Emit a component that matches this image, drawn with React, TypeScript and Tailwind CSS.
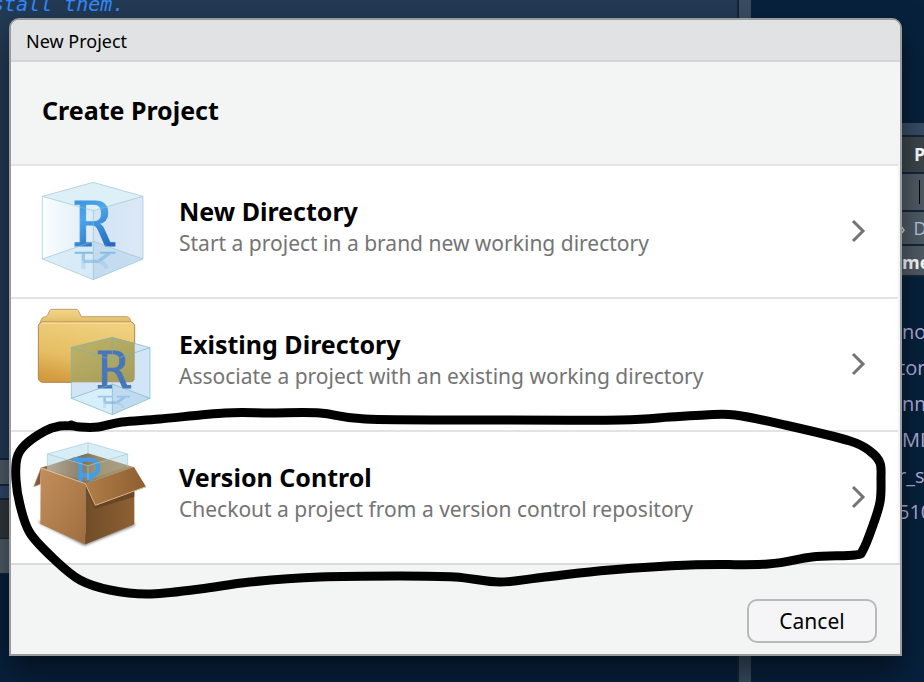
import React from "react";

type Point = [number, number];

const strokePoints: Point[] = [
  [71, 425], [80, 427], [98, 427], [122, 422], [160, 419], [225, 413], [270, 413], [320, 413], [365, 419], [480, 420],
  [620, 420], [670, 417], [705, 415], [735, 415], [785, 425], [850, 441], [871, 452], [880, 463], [881, 478],
  [880, 502], [872, 528], [863, 550], [855, 555], [812, 557], [768, 564], [690, 565], [610, 570], [545, 577],
  [500, 582], [455, 577], [400, 576], [320, 577], [250, 582], [200, 589], [148, 594], [110, 590], [80, 580], [55, 560],
  [30, 533], [20, 505], [16, 480], [17, 458], [25, 445], [45, 431], [60, 426], [73, 426],
];

function smoothPath(points: Point[]) {
  let d = `M${points[0][0]} ${points[0][1]}`;
  for (let i = 0; i < points.length - 1; i++) {
    const before = points[Math.max(i - 1, 0)];
    const a = points[i];
    const b = points[i + 1];
    const after = points[Math.min(i + 2, points.length - 1)];
    d += ` C${a[0] + (b[0] - before[0]) / 6} ${a[1] + (b[1] - before[1]) / 6}`;
    d += ` ${b[0] - (after[0] - a[0]) / 6} ${b[1] - (after[1] - a[1]) / 6} ${b[0]} ${b[1]}`;
  }
  return d;
}

function CubeIcon() {
  return (
    <svg aria-hidden="true" viewBox="33 -12 360 396" className="h-[132px] w-[120px] shrink-0">
      <defs>
        <linearGradient id="cubeLeft" x1="0" x2="1">
          <stop offset="0" stopColor="#fbfdff" />
          <stop offset="1" stopColor="#dcecf5" />
        </linearGradient>
        <linearGradient id="cubeRight" x1="0" x2="1">
          <stop offset="0" stopColor="#d3e4f4" />
          <stop offset="1" stopColor="#dbe8f7" />
        </linearGradient>
        <linearGradient id="cubeLetter" x1="0" y1="0" x2="0.4" y2="1">
          <stop offset="0" stopColor="#3387d3" />
          <stop offset="0.45" stopColor="#4ba6ec" />
          <stop offset="1" stopColor="#2468bd" />
        </linearGradient>
      </defs>
      <path d="M67 79 220 37 369 79 369 267 220 329 67 267Z" fill="#eaf5fa" />
      <path d="M67 79 220 122V329L67 267Z" fill="url(#cubeLeft)" />
      <path d="M220 122 369 79V267L220 329Z" fill="url(#cubeRight)" />
      <path d="M67 267 220 214V329Z" fill="#d3eaf7" opacity=".8" />
      <path d="M220 214 369 267 220 329Z" fill="#bfd8ed" opacity=".75" />
      <path d="M67 79 220 37 369 79 220 122Z" fill="#dceff6" opacity=".9" />
      <g fill="none" stroke="#86bae3" strokeWidth="13">
        <path d="M164 248H219M240 248H286" strokeWidth="6" />
        <path d="M190 250V272M268 250 238 272M190 274H238" opacity=".7" strokeWidth="10" />
        <path d="M190 272V297M238 274Q256 280 260 295" opacity=".3" />
      </g>
      <text x="156" y="228" fontSize="184" fill="url(#cubeLetter)" stroke="url(#cubeLetter)" strokeWidth="3" className="font-['DejaVu_Serif_Condensed','DejaVu_Serif',serif]">R</text>
      <path d="M67 79 220 37 369 79 369 267 220 329 67 267ZM67 79 220 122 369 79M220 122V329M67 267 220 214 369 267" fill="none" stroke="#93bfc9" strokeOpacity=".7" strokeWidth="2.5" />
    </svg>
  );
}

function FolderIcon() {
  return (
    <svg aria-hidden="true" viewBox="33 -3 360 396" className="h-[132px] w-[120px] shrink-0">
      <defs>
        <linearGradient id="folderFront" x1="0.6" y1="0" x2="0.3" y2="1">
          <stop offset="0" stopColor="#efd17f" />
          <stop offset="0.6" stopColor="#e6bd63" />
          <stop offset="1" stopColor="#d19a3d" />
        </linearGradient>
        <linearGradient id="folderBack" x1="0" y1="0" x2="0" y2="1">
          <stop offset="0" stopColor="#f3d78c" />
          <stop offset="1" stopColor="#dfb75d" />
        </linearGradient>
        <linearGradient id="folderOverlap" x1="0" y1="0" x2="1" y2="1">
          <stop offset="0" stopColor="#b9b167" />
          <stop offset="1" stopColor="#9d9a5c" />
        </linearGradient>
      </defs>
      <path d="M62 66Q62 52 77 50L82 47 89 32Q91 28 96 28H168Q173 28 175 32L184 50H320Q332 51 332 65V76H62Z" fill="url(#folderBack)" stroke="#b98d5b" strokeWidth="2.5" />
      <rect x="55" y="66" width="289" height="181" rx="13" fill="url(#folderFront)" stroke="#b5824d" strokeWidth="3" />
      <path d="M64 69H335" stroke="#fae7ae" strokeWidth="3" />
      <path d="M154 142 277 112 344 129V234Q344 247 331 247H154Z" fill="url(#folderOverlap)" opacity=".9" />
      <path d="M344 129 390 143V295L277 344 154 295V247H331Q344 247 344 234Z" fill="#d0e4f5" opacity=".95" />
      <path d="M154 295 277 252V344Z" fill="#d7f1fb" opacity=".8" />
      <path d="M277 252 390 295 277 344Z" fill="#b7d6ee" opacity=".65" />
      <g fill="none" stroke="#8fbde3" opacity=".8">
        <path d="M233 290H276M290 290H330" strokeWidth="5" />
        <path d="M254 292V308M313 292 292 307M254 308H290" strokeWidth="8" />
        <path d="M254 308V325M290 308Q306 312 310 323" strokeWidth="9" opacity=".4" />
      </g>
      <text x="227" y="264" fontSize="150" fill="#4876ba" stroke="#4876ba" strokeWidth="3" className="font-['DejaVu_Serif_Condensed','DejaVu_Serif',serif]">R</text>
      <path d="M154 142 277 112 390 143V295L277 344 154 295ZM154 142 277 180 390 143M277 112V180M277 252V344M154 295 277 252 390 295" fill="none" stroke="#73b3b5" strokeOpacity=".75" strokeWidth="2.5" />
    </svg>
  );
}

function BoxIcon() {
  return (
    <svg aria-hidden="true" viewBox="63 21 360 396" className="h-[132px] w-[120px] shrink-0">
      <defs>
        <linearGradient id="boxLeft" x1="0" y1="0" x2="1" y2="1">
          <stop offset="0" stopColor="#c28e5c" />
          <stop offset="1" stopColor="#a06e3e" />
        </linearGradient>
        <linearGradient id="boxRight" x1="0" x2="1">
          <stop offset="0" stopColor="#704d28" />
          <stop offset="1" stopColor="#8e6034" />
        </linearGradient>
        <linearGradient id="boxFlap" x1="0" y1="0" x2="1" y2="0">
          <stop offset="0" stopColor="#b07e47" />
          <stop offset="1" stopColor="#8d5e31" />
        </linearGradient>
        <linearGradient id="boxInside" x1="0" x2="1">
          <stop offset="0" stopColor="#b9ac9d" />
          <stop offset="0.45" stopColor="#80704f" />
          <stop offset="0.6" stopColor="#9a8a66" />
          <stop offset="1" stopColor="#aa9a7b" />
        </linearGradient>
        <filter id="boxBlur" x="-20%" y="-20%" width="140%" height="140%">
          <feGaussianBlur stdDeviation="5" />
        </filter>
        <clipPath id="boxOpening">
          <path d="M90 40H380V130L226 174 90 130Z" />
        </clipPath>
      </defs>
      <path d="M88 290 224 358 374 298 226 330Z" fill="#000" stroke="#000" strokeWidth="6" opacity=".55" filter="url(#boxBlur)" />
      <path d="M112 87 234 53 353 87V130H112Z" fill="#d9edf7" />
      <path d="M93 128 234 85 373 127 226 176Z" fill="url(#boxInside)" />
      <path d="M93 128 113 122V136Z" fill="#8e6337" />
      <path d="M112 87 234 122 353 87V123L226 168 112 132Z" fill="#c0d7da" opacity=".15" />
      <g clipPath="url(#boxOpening)" fill="none" stroke="#469ce5">
        <path d="M188 104H240Q264 106 264 128 264 150 236 151H211M211 104V180M236 151 256 190" strokeWidth="13" />
      </g>
      <path d="M112 134V87L234 53 353 87V125M112 87 234 122 353 87M234 53V85M234 122V165" fill="none" stroke="#9fcdd3" strokeWidth="2.5" strokeOpacity=".8" />
      <path d="M92 130 226 176V358L91 297Z" fill="url(#boxLeft)" />
      <path d="M226 176 373 130V298L226 358Z" fill="url(#boxRight)" />
      <path d="M226 180 254 252 373 215V198Z" fill="#5e3f20" opacity=".7" />
      <path d="M93 128 71 185 91 178Z" fill="#85583a" stroke="#c9a27c" strokeWidth="1.5" />
      <path d="M226 176 372 126 408 185 256 241Z" fill="url(#boxFlap)" />
      <path d="M93 128 226 176 256 241 408 185" fill="none" stroke="#d9b48d" strokeWidth="3" />
    </svg>
  );
}

const options = [
  { title: "New Directory", detail: "Start a project in a brand new working directory", Icon: CubeIcon },
  { title: "Existing Directory", detail: "Associate a project with an existing working directory", Icon: FolderIcon },
  { title: "Version Control", detail: "Checkout a project from a version control repository", Icon: BoxIcon },
];

function EditorBackdrop() {
  return (
    <div className="flex h-full overflow-hidden" aria-hidden="true">
      <div className="flex min-w-0 flex-1 flex-col border-r-2 border-[#12243a] bg-[#07213d]">
        <div className="h-[458px] bg-[#223a54]">
          <p className="-mt-2 -ml-2 font-['DejaVu_Sans_Mono',monospace] text-[20px] leading-[24px] text-[#3389fb] italic">stall them.</p>
        </div>
        <div className="h-7 border-y-2 border-[#14273c] bg-[#4f5c69]" />
        <div className="h-3 bg-[#31496a]" />
        <div className="h-10 border-t-2 border-[#14273c] bg-[#2f373e]" />
        <div className="h-9 border-y border-[#14273c] bg-[#4f5c69]" />
      </div>
      <div className="w-3 bg-[#384c62]" />
      <div className="flex w-[173px] flex-col overflow-hidden border-l-2 border-[#0d2036] bg-[#07213d] font-['Open_Sans','Noto_Sans',sans-serif] text-[20px] font-medium whitespace-nowrap">
        <div className="h-[123px] shrink-0 border-b-2 border-[#0d2036]" />
        <div className="h-3 shrink-0 bg-[#384d67]" />
        <div className="h-[39px] shrink-0 border-y-2 border-[#14273c] bg-[#3d464b] pl-[161px] text-[18px] leading-[35px] font-bold text-white">P</div>
        <div className="flex h-9 shrink-0 items-center bg-[#505b65] pl-[166px]">
          <div className="h-6 w-px bg-black" />
        </div>
        <div className="flex h-9 shrink-0 items-center border-y-2 border-[#14273c] bg-[#505b65] text-[18px] text-[#b8cce8]">
          <span className="pl-[147px] text-[#dfe2e0]">›</span>
          <span className="pl-2">D</span>
        </div>
        <div className="h-[31px] shrink-0 border-b-2 border-[#14273c] bg-[#505b65] pl-[149px] text-[18px] leading-[32px] font-bold text-white">me</div>
        <div className="flex flex-col pt-[37px] pl-[149px] leading-[36px] text-[#b3b0da]">
          <span>no</span>
          <span className="-ml-1">tor</span>
          <span>nm</span>
          <span>MI</span>
          <span className="-ml-1">r_s</span>
          <span className="-ml-1">510</span>
        </div>
      </div>
    </div>
  );
}

export default function App() {
  return (
    <div className="relative h-screen overflow-hidden bg-[#07213d] font-['Noto_Sans',sans-serif]">
      <EditorBackdrop />
      <div className="absolute inset-0 pt-[18px] pr-[22px] pl-[9px]">
        <main role="dialog" aria-labelledby="dialog-title" className="overflow-hidden rounded-t-[10px] border-2 border-[#999b9c] bg-[#f3f5f4] text-black shadow-[0_16px_32px_rgba(0,0,0,0.5)]">
          <header id="dialog-title" className="h-[42px] border-b-2 border-[#d5d6da] bg-[#e1e2e4] pl-[15px] text-[18px] leading-[42px]">New Project</header>
          <h1 className="h-[102px] pl-[31px] text-[25px] leading-[96px] font-bold">Create Project</h1>
          <ul className="mr-[2px]">
            {options.map(({ title, detail, Icon }) => (
              <li key={title} className="h-[133px] border-t-2 border-[#e3e3e3] bg-white">
                <button type="button" className="flex h-full w-full items-center pl-5 text-left">
                  <Icon />
                  <span className="flex-1 pb-[10px] pl-[28px]">
                    <span className="block text-[25px] leading-[32px] font-bold">{title}</span>
                    <span className="block text-[21px] leading-[32px] text-[#747474]">{detail}</span>
                  </span>
                  <svg aria-hidden="true" viewBox="0 0 16 24" className="mr-[31px] mb-[2px] h-6 w-4">
                    <path d="M2 2 12 12 2 22" fill="none" stroke="#737475" strokeWidth="3" />
                  </svg>
                </button>
              </li>
            ))}
          </ul>
          <footer className="flex h-[91px] justify-end border-t-2 border-[#dadada] pt-[34px] pr-[23px]">
            <button type="button" className="h-11 w-[130px] rounded-[10px] border-2 border-[#b9b9b9] bg-[#f5f5f8] text-[21px] leading-[40px]">Cancel</button>
          </footer>
        </main>
      </div>
      <svg aria-hidden="true" viewBox="0 0 924 682" className="pointer-events-none absolute inset-0 h-[682px] w-[924px]">
        <path d={smoothPath(strokePoints)} fill="none" stroke="#000" strokeWidth="9" strokeLinecap="round" strokeLinejoin="round" />
      </svg>
    </div>
  );
}
